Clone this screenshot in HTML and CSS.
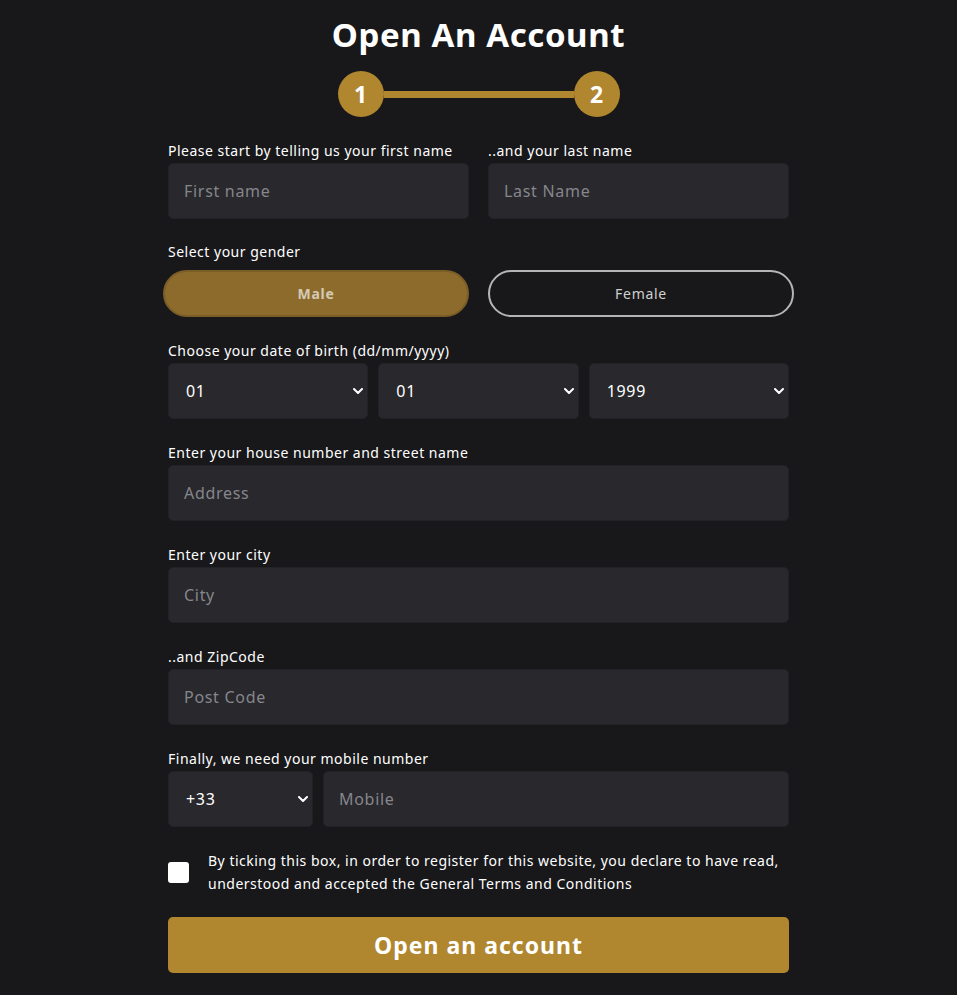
FILE: index.html
```html
<!DOCTYPE html>
<html lang="en">
	<head>
		<title>Open An Account</title>
		<link rel="stylesheet" href="styles.css">
	</head>
	<body>
		<div class="page">
			<h1 class="title">Open An Account</h1>

			<div class="steps">
				<span class="step">1</span>
				<span class="step-line"></span>
				<span class="step">2</span>
			</div>

			<form class="form">
				<div class="row two">
					<div class="field">
						<label>Please start by telling us your first name</label>
						<input type="text" name="firstname" placeholder="First name"/>
					</div>
					<div class="field">
						<label>..and your last name</label>
						<input type="text" name="lastname" placeholder="Last Name"/>
					</div>
				</div>

				<div class="field gender-field">
					<label>Select your gender</label>
					<div class="gender">
						<button type="button" class="gender-btn active">Male</button>
						<button type="button" class="gender-btn">Female</button>
					</div>
				</div>

				<div class="field">
					<label>Choose your date of birth (dd/mm/yyyy)</label>
					<div class="row three">
						<div class="select-wrap">
							<select name="day"><option>01</option></select>
							<svg class="chev" width="10" height="6" viewBox="0 0 10 6"><path d="M1 1l4 4 4-4" fill="none" stroke="#fff" stroke-width="2" stroke-linecap="round" stroke-linejoin="round"/></svg>
						</div>
						<div class="select-wrap">
							<select name="month"><option>01</option></select>
							<svg class="chev" width="10" height="6" viewBox="0 0 10 6"><path d="M1 1l4 4 4-4" fill="none" stroke="#fff" stroke-width="2" stroke-linecap="round" stroke-linejoin="round"/></svg>
						</div>
						<div class="select-wrap">
							<select name="year"><option>1999</option></select>
							<svg class="chev" width="10" height="6" viewBox="0 0 10 6"><path d="M1 1l4 4 4-4" fill="none" stroke="#fff" stroke-width="2" stroke-linecap="round" stroke-linejoin="round"/></svg>
						</div>
					</div>
				</div>

				<div class="field">
					<label>Enter your house number and street name</label>
					<input type="text" name="address" placeholder="Address"/>
				</div>

				<div class="field">
					<label>Enter your city</label>
					<input type="text" name="city" placeholder="City"/>
				</div>

				<div class="field">
					<label>..and ZipCode</label>
					<input type="text" name="zip" placeholder="Post Code"/>
				</div>

				<div class="field">
					<label>Finally, we need your mobile number</label>
					<div class="row phone">
						<div class="select-wrap">
							<select name="prefix"><option>+33</option></select>
							<svg class="chev" width="10" height="6" viewBox="0 0 10 6"><path d="M1 1l4 4 4-4" fill="none" stroke="#fff" stroke-width="2" stroke-linecap="round" stroke-linejoin="round"/></svg>
						</div>
						<input type="text" name="mobile" placeholder="Mobile"/>
					</div>
				</div>

				<div class="terms">
					<input type="checkbox" name="terms" class="check"/>
					<p>By ticking this box, in order to register for this website, you declare to have read, understood and accepted the General Terms and Conditions</p>
				</div>

				<button type="button" class="submit">Open an account</button>
			</form>
		</div>
	</body>
</html>
```

FILE: styles.css
```css
*{margin:0px;padding:0px;box-sizing:border-box;}
body{background:#18181a;font-family:"Noto Sans",sans-serif;color:#fff;}

.page{width:621px;margin:0 auto;padding-top:14px;}
.title{font-size:33px;font-weight:700;text-align:center;line-height:42px;letter-spacing:0.6px;}

.steps{display:flex;align-items:center;justify-content:center;margin-top:15px;}
.step{width:46px;height:46px;border-radius:50%;background:#b0862f;color:#fff;font-weight:700;font-size:23px;display:flex;align-items:center;justify-content:center;}
.step-line{width:190px;height:7px;background:#b0862f;}

.form{margin-top:24px;}
.field{margin-bottom:24px;}
.field label{display:block;font-size:14px;line-height:20px;margin-bottom:2px;letter-spacing:0.5px;}

.row{display:flex;}
.row.two{gap:19px;}
.row.two .field{flex:1;margin-bottom:23px;}
.row.three{gap:10px;}
.row.three .select-wrap{flex:1;}
.row.phone{gap:10px;}
.row.phone .select-wrap{width:145px;}
.row.phone input{flex:1;}

input[type=text],select{width:100%;height:56px;background:#28282d;border:1px solid #222226;border-radius:5px;color:#fff;font-family:"Noto Sans",sans-serif;font-size:16px;letter-spacing:0.7px;padding:0 15px;outline:none;}
input::placeholder{color:#86868b;}
select{appearance:none;-webkit-appearance:none;padding-left:17px;}

.select-wrap{position:relative;}
.chev{position:absolute;right:5px;top:25px;pointer-events:none;}

.gender-field label{margin-bottom:8px;}
.gender{display:flex;gap:19px;margin:0 -5px;}
.gender-btn{flex:1;height:47px;border-radius:24px;font-family:"Noto Sans",sans-serif;font-size:14px;letter-spacing:0.7px;cursor:pointer;}
.gender-btn.active{background:#8d6b2c;border:2px solid #7a5d27;color:#d4cab4;font-weight:700;}
.gender-btn:not(.active){background:transparent;border:2px solid #b5b5b5;color:#cfcfcf;}

.terms{display:flex;align-items:flex-start;gap:19px;margin-top:-2px;}
.check{appearance:none;-webkit-appearance:none;width:21px;height:21px;flex:none;background:#fff;border-radius:3px;margin-top:13px;}
.terms p{font-size:14px;line-height:23px;letter-spacing:0.5px;}

.submit{width:100%;height:56px;margin-top:22px;background:#b0862f;border:none;border-radius:5px;color:#fff;font-family:"Noto Sans",sans-serif;font-size:23px;font-weight:700;letter-spacing:1px;}
```
